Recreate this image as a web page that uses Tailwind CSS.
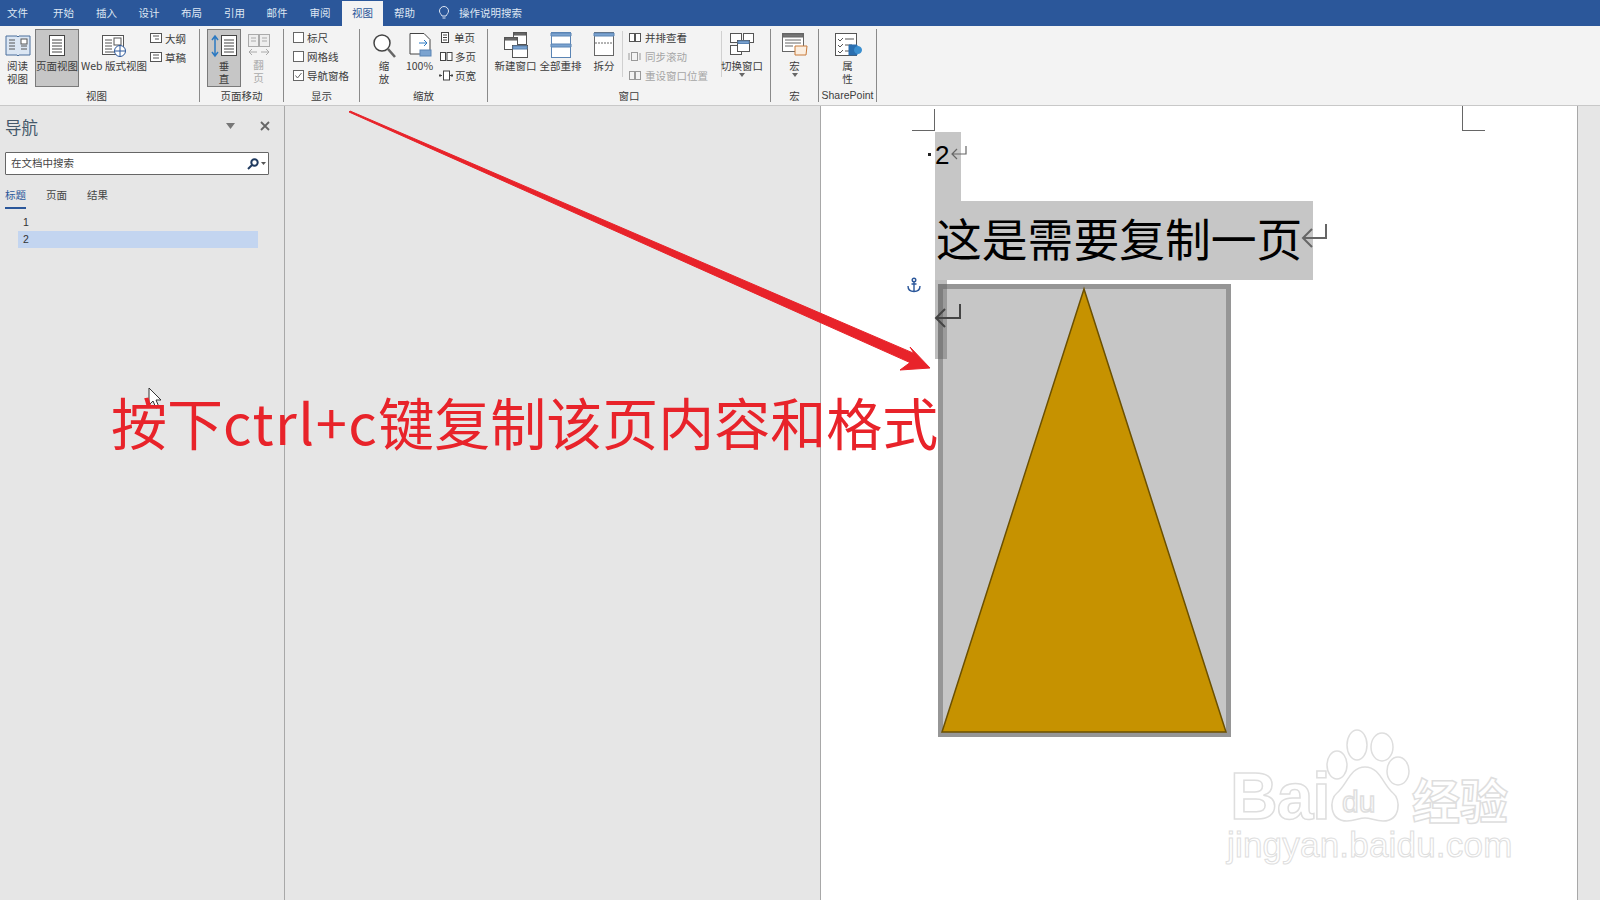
<!DOCTYPE html>
<html lang="zh"><head><meta charset="utf-8"><script src="https://cdn.jsdelivr.net/npm/@tailwindcss/browser@4"></script><title>Word</title></head>
<body class="w-[1600px] h-[900px] overflow-hidden bg-[#e6e6e6] font-['Noto_Sans_CJK_SC',sans-serif] text-[#444]">
<div class="relative w-[1600px] h-[900px] flex flex-col overflow-hidden">
  <!-- title tabs -->
  <div class="h-[26px] bg-[#2b579a] flex items-center text-[10.5px] text-[#dfe7f3] shrink-0 leading-none">
    <span class="w-[35px] text-center">文件</span>
    <span class="w-[43px] ml-[7px] text-center">开始</span>
    <span class="w-[43px] text-center">插入</span>
    <span class="w-[42px] text-center">设计</span>
    <span class="w-[43px] text-center">布局</span>
    <span class="w-[43px] text-center">引用</span>
    <span class="w-[42px] text-center">邮件</span>
    <span class="w-[44px] text-center">审阅</span>
    <span class="w-[41px] h-[25px] mt-[1px] bg-[#f3f3f3] text-[#2b579a] flex items-center justify-center">视图</span>
    <span class="w-[43px] text-center">帮助</span>
    <svg class="ml-[12px] w-[12px] h-[14px]" viewBox="0 0 12 14" fill="none" stroke="#dfe7f3"><path d="M4 10C3 8 1.500 7 1.500 5a4.500 4.500 0 0 1 9 0c0 2-1.500 3-2.500 5zM4.500 12h3"/></svg>
    <span class="ml-[9px]">操作说明搜索</span>
  </div>
  <!-- ribbon -->
  <div class="h-[80px] bg-[#f3f3f3] border-b border-[#c8c8c8] flex shrink-0 text-[10.5px] leading-[13px] text-[#3c3c3c]">
    <!-- 视图 -->
    <div class="w-[200px] flex flex-col border-r border-[#8a8a8a] mt-[3px] h-[73px]">
      <div class="h-[60px] shrink-0 flex">
        <div class="w-[35px] flex flex-col items-center pt-[5px]">
          <svg class="w-[28px] h-[24px] shrink-0" viewBox="0 0 28 24" fill="#fff" stroke="#555"><path d="M2 2h11l1 1 1-1h11v19H15l-1 1-1-1H2z" fill="#dbe6f3" stroke="#4a6f9c"/><path d="M5 6h6M5 9h6M5 12h6M5 15h6M17 12h6M17 15h6" /><rect x="17" y="5" width="6" height="5"/></svg>
          <span class="mt-[1px] text-center w-[24px]">阅读视图</span>
        </div>
        <div class="w-[44px] h-[58px] bg-[#c6c6c6] border border-[#7a7a7a] flex flex-col items-center pt-[4px]">
          <svg class="w-[20px] h-[24px] shrink-0" viewBox="0 0 20 24" fill="#fff" stroke="#444"><rect x="2.500" y="1.500" width="15" height="20"/><path d="M5 6h10M5 9h10M5 12h10M5 15h10M5 18h10"/></svg>
          <span class="mt-[1px] whitespace-nowrap">页面视图</span>
        </div>
        <div class="w-[68px] ml-[1px] flex flex-col items-center pt-[5px]">
          <svg class="w-[28px] h-[24px] shrink-0" viewBox="0 0 28 24" fill="#fff" stroke="#555"><rect x="2.500" y="1.500" width="21" height="19"/><path d="M5 6h7M5 9h7M5 12h7M5 15h7M5 18h10"/><rect x="14" y="4" width="7" height="7"/><circle cx="20" cy="17" r="5.500" stroke="#2b579a"/><path d="M15 17h10M20 11.500v11" stroke="#2b579a"/></svg>
          <span class="mt-[1px] whitespace-nowrap">Web 版式视图</span>
        </div>
        <div class="ml-[1px] flex flex-col gap-[6px] pt-[3px]">
          <div class="flex items-center gap-[2px]"><svg class="w-[14px] h-[13px]" viewBox="0 0 14 13" fill="#fff" stroke="#555"><rect x="1.500" y="1.500" width="11" height="9"/><path d="M4 4h6M6 7h4"/></svg><span>大纲</span></div>
          <div class="flex items-center gap-[2px]"><svg class="w-[14px] h-[13px]" viewBox="0 0 14 13" fill="#fff" stroke="#555"><rect x="1.500" y="1.500" width="11" height="9"/><path d="M4 4h6M4 7h6"/></svg><span>草稿</span></div>
        </div>
      </div>
      <div class="text-center pr-[6px]">视图</div>
    </div>
    <!-- 页面移动 -->
    <div class="w-[84px] flex flex-col border-r border-[#8a8a8a] mt-[3px] h-[73px]">
      <div class="h-[60px] shrink-0 flex pl-[7px]">
        <div class="w-[34px] h-[58px] bg-[#c6c6c6] border border-[#7a7a7a] flex flex-col items-center pt-[4px]">
          <svg class="w-[30px] h-[24px] shrink-0" viewBox="0 0 30 24" fill="#fff" stroke="#444"><rect x="12.500" y="1.500" width="15" height="20"/><path d="M15 6h10M15 9h10M15 12h10M15 15h10M15 18h10"/><path d="M6 2v20M3 6l3-4 3 4M3 18l3 4 3-4" fill="none" stroke="#2b79c2" stroke-width="1.500"/></svg>
          <span class="mt-[1px] w-[12px] text-center">垂直</span>
        </div>
        <div class="w-[27px] ml-[4px] flex flex-col items-center pt-[4px] text-[#aaa]">
          <svg class="w-[24px] h-[24px] shrink-0" viewBox="0 0 24 24" fill="#eee" stroke="#aaa"><rect x="1.500" y="1.500" width="10" height="12"/><rect x="12.500" y="1.500" width="10" height="12"/><path d="M4 5h5M4 8h5M15 5h5M15 8h5"/><path d="M2 19h8M5 16l-3 3 3 3M14 19h8M19 16l3 3-3 3" fill="none"/></svg>
          <span class="mt-[1px] w-[12px] text-center">翻页</span>
        </div>
      </div>
      <div class="text-center">页面移动</div>
    </div>
    <!-- 显示 -->
    <div class="w-[76px] flex flex-col border-r border-[#8a8a8a] mt-[3px] h-[73px]">
      <div class="h-[60px] shrink-0 flex flex-col pl-[9px] pt-[2px] gap-[6px]">
        <div class="flex items-center gap-[3px]"><span class="w-[11px] h-[11px] border border-[#666] bg-white block"></span><span>标尺</span></div>
        <div class="flex items-center gap-[3px]"><span class="w-[11px] h-[11px] border border-[#666] bg-white block"></span><span>网格线</span></div>
        <div class="flex items-center gap-[3px]"><svg class="w-[11px] h-[11px]" viewBox="0 0 11 11" fill="#fff" stroke="#666"><rect x=".5" y=".5" width="10" height="10"/><path d="M2.500 5.500l2 2.500 4-5" fill="none"/></svg><span>导航窗格</span></div>
      </div>
      <div class="text-center">显示</div>
    </div>
    <!-- 缩放 -->
    <div class="w-[128px] flex flex-col border-r border-[#8a8a8a] mt-[3px] h-[73px]">
      <div class="h-[60px] shrink-0 flex pl-[12px]">
        <div class="w-[24px] flex flex-col items-center pt-[4px]">
          <svg class="w-[26px] h-[26px] shrink-0" viewBox="0 0 26 26" fill="#fff" stroke="#444"><circle cx="11" cy="10" r="8" stroke-width="1.500"/><path d="M17 16l7 8" stroke-width="2.500" stroke="#666"/></svg>
          <span class="mt-0 w-[12px] text-center">缩放</span>
        </div>
        <div class="w-[29px] ml-[9px] flex flex-col items-center pt-[3px]">
          <svg class="w-[24px] h-[26px] shrink-0" viewBox="0 0 24 26" fill="#fff" stroke="#444"><path d="M2 1.500h14l6 6V22H2z"/><path d="M11 11h8M16 8l3 3-3 3" fill="none" stroke="#2b79c2"/><rect x="12" y="18" width="11" height="6" fill="#7ba3d0" stroke="#5a84b4"/></svg>
          <span class="mt-[1px]">100%</span>
        </div>
        <div class="ml-[5px] flex flex-col gap-[6px] pt-[2px]">
          <div class="flex items-center gap-[3px]"><svg class="w-[12px] h-[13px]" viewBox="0 0 12 13" fill="#fff" stroke="#444"><rect x="2.500" y="1.500" width="7" height="10"/><path d="M4 4h4M4 6.500h4M4 9h4"/></svg><span>单页</span></div>
          <div class="flex items-center gap-[3px]"><svg class="w-[14px] h-[13px]" viewBox="0 0 14 13" fill="#fff" stroke="#444"><rect x="1.500" y="2.500" width="5" height="8"/><rect x="8" y="2.500" width="5" height="8"/></svg><span class="-ml-[1px]">多页</span></div>
          <div class="flex items-center gap-[3px]"><svg class="w-[14px] h-[13px]" viewBox="0 0 14 13" fill="#fff" stroke="#444"><rect x="4.500" y="2" width="6" height="9"/><path d="M3 6.500H0M1.500 5L0 6.500 1.500 8M11 6.500h3M12.500 5l1.500 1.500L12.500 8" fill="none"/></svg><span class="-ml-[1px]">页宽</span></div>
        </div>
      </div>
      <div class="text-center">缩放</div>
    </div>
    <!-- 窗口 -->
    <div class="w-[283px] flex flex-col border-r border-[#8a8a8a] mt-[3px] h-[73px]">
      <div class="h-[60px] shrink-0 flex pl-[6px]">
        <div class="w-[43px] flex flex-col items-center pt-[2px]">
          <svg class="w-[26px] h-[28px] shrink-0" viewBox="0 0 26 28" fill="#fff" stroke="#555"><rect x="10.500" y="1.500" width="13" height="12"/><rect x="1.500" y="6.500" width="13" height="12"/><rect x="9.500" y="14.500" width="15" height="12"/><path d="M10 15h14v3H10z" fill="#7ba3d0" stroke="#5a84b4"/><path d="M2 7h12v2H2zM11 2h12v2H11z" fill="#777"/></svg>
          <span class="mt-0 whitespace-nowrap">新建窗口</span>
        </div>
        <div class="w-[41px] ml-[3px] flex flex-col items-center pt-[2px]">
          <svg class="w-[22px] h-[28px] shrink-0" viewBox="0 0 22 28" fill="#fff" stroke="#5a84b4"><rect x="1.500" y="1.500" width="19" height="25"/><path d="M1 2h20v3H1zM1 13h20v3H1z" fill="#7ba3d0"/></svg>
          <span class="mt-0 whitespace-nowrap">全部重排</span>
        </div>
        <div class="w-[26px] ml-[10px] flex flex-col items-center pt-[2px]">
          <svg class="w-[22px] h-[28px] shrink-0" viewBox="0 0 22 28" fill="#fff" stroke="#666"><rect x="1.500" y="1.500" width="19" height="23"/><path d="M1 2h20v3H1z" fill="#7ba3d0" stroke="#5a84b4"/><path d="M2 12h18" stroke-dasharray="2 1"/></svg>
          <span class="mt-0 whitespace-nowrap">拆分</span>
        </div>
        <div class="w-[1px] h-[46px] bg-[#d0d0d0] ml-[5px] mt-[2px]"></div>
        <div class="ml-[5px] w-[86px] flex flex-col gap-[6px] pt-[2px]">
          <div class="flex items-center gap-[2px] whitespace-nowrap"><svg class="w-[14px] h-[13px] mr-[1px]" viewBox="0 0 14 13" fill="#fff" stroke="#555"><rect x="1.500" y="2.500" width="5" height="8"/><rect x="7.500" y="2.500" width="5" height="8"/></svg><span>并排查看</span></div>
          <div class="flex items-center gap-[2px] whitespace-nowrap text-[#a5a5a5]"><svg class="w-[14px] h-[13px] mr-[1px]" viewBox="0 0 14 13" fill="#f3f3f3" stroke="#999"><rect x="3.500" y="2.500" width="6" height="8"/><path d="M1 3v7M12 3v7"/></svg><span>同步滚动</span></div>
          <div class="flex items-center gap-[2px] whitespace-nowrap text-[#a5a5a5]"><svg class="w-[14px] h-[13px] mr-[1px]" viewBox="0 0 14 13" fill="#f3f3f3" stroke="#999"><rect x="1.500" y="2.500" width="5" height="8"/><rect x="7.500" y="2.500" width="5" height="8"/></svg><span>重设窗口位置</span></div>
        </div>
        <div class="w-[1px] h-[46px] bg-[#d0d0d0] ml-[7px] mt-[2px]"></div>
        <div class="w-[38px] ml-[1px] flex flex-col items-center pt-[3px]">
          <svg class="w-[26px] h-[26px] shrink-0" viewBox="0 0 26 26" fill="#fff" stroke="#555"><rect x="1.500" y="1.500" width="11" height="9"/><rect x="14.500" y="1.500" width="10" height="9"/><rect x="1.500" y="13.500" width="11" height="9"/><rect x="8.500" y="8.500" width="12" height="11"/><path d="M9 9h11v2.500H9z" fill="#7ba3d0" stroke="#5a84b4"/></svg>
          <span class="mt-[1px] whitespace-nowrap">切换窗口</span>
          <svg class="w-[6px] h-[4px] mt-[1px]" viewBox="0 0 6 4" fill="#666"><path d="M0 0h6L3 4z"/></svg>
        </div>
      </div>
      <div class="text-center">窗口</div>
    </div>
    <!-- 宏 -->
    <div class="w-[48px] flex flex-col border-r border-[#8a8a8a] mt-[3px] h-[73px]">
      <div class="h-[60px] shrink-0 flex flex-col items-center pt-[3px]">
        <svg class="w-[28px] h-[26px] shrink-0" viewBox="0 0 28 26" fill="#fff" stroke="#666"><rect x="1.500" y="1.500" width="21" height="18"/><path d="M2 2h20v3H2z" fill="#777"/><path d="M4 8h16M4 11h16M4 14h8"/><path d="M14 14h12l-1 9H14z" fill="#fbeee0" stroke="#c87a3a"/></svg>
        <span class="mt-[1px]">宏</span>
        <svg class="w-[6px] h-[4px] mt-[1px]" viewBox="0 0 6 4" fill="#666"><path d="M0 0h6L3 4z"/></svg>
      </div>
      <div class="text-center">宏</div>
    </div>
    <!-- SharePoint -->
    <div class="w-[58px] flex flex-col border-r border-[#8a8a8a] mt-[3px] h-[73px]">
      <div class="h-[60px] shrink-0 flex flex-col items-center pt-[3px]">
        <svg class="w-[28px] h-[27px] shrink-0" viewBox="0 0 28 27" fill="#fff" stroke="#555"><rect x="1.500" y="1.500" width="21" height="22"/><path d="M4 7l2 2 3-3M4 13l2 2 3-3M4 19l2 2 3-3M11 7h9M11 13h7M11 19h4" fill="none"/><path d="M15 13h8v10h-8z" fill="#2a6fb0" stroke="#2a6fb0"/><circle cx="24" cy="18" r="3.500" fill="#3b8fd0" stroke="#3b8fd0"/></svg>
        <span class="mt-0 w-[12px] text-center">属性</span>
      </div>
      <div class="text-center font-['Liberation_Sans',sans-serif] whitespace-nowrap">SharePoint</div>
    </div>
  </div>
  <!-- body -->
  <div class="flex flex-1 min-h-0">
    <!-- nav -->
    <aside class="w-[285px] border-r border-[#a8a8a8] shrink-0 px-[5px]">
      <div class="flex items-center h-[42px] pt-[1px]">
        <span class="text-[16.500px] text-[#44586a] leading-none">导航</span>
        <svg class="ml-[188px] w-[9px] h-[6px] -mt-[3px]" viewBox="0 0 9 6" fill="#777"><path d="M0 0h9L4.500 6z"/></svg>
        <svg class="ml-[25px] w-[10px] h-[10px] -mt-[3px]" viewBox="0 0 10 10" stroke="#666" stroke-width="1.800"><path d="M1 1l8 8M9 1l-8 8"/></svg>
      </div>
      <div class="w-[264px] h-[23px] mt-[4px] bg-white border border-[#666] rounded-[1px] flex items-center pl-[5px] pr-[2px] text-[10.500px]">
        <span class="flex-1 -mt-[2px]">在文档中搜索</span>
        <svg class="w-[12px] h-[12px]" viewBox="0 0 12 12" fill="none" stroke="#1f3a5f" stroke-width="2"><circle cx="7.500" cy="4.500" r="3.200"/><path d="M5 7l-4 4"/></svg>
        <svg class="ml-[2px] w-[5px] h-[3px]" viewBox="0 0 5 3" fill="#555"><path d="M0 0h5L2.500 3z"/></svg>
      </div>
      <div class="flex mt-[12px] text-[10.500px] leading-[15px]">
        <div class="w-[21px] h-[22px] border-b-2 border-[#2b579a] text-[#2b579a]">标题</div>
        <div class="ml-[20px]">页面</div>
        <div class="ml-[20px]">结果</div>
      </div>
      <div class="ml-[13px] w-[240px] mt-[5px] text-[10.500px] font-['Liberation_Sans',sans-serif] leading-[17px] text-[#333]">
        <div class="pl-[5px] h-[17px]">1</div>
        <div class="pl-[5px] h-[17px] bg-[#c3d5f0]">2</div>
      </div>
    </aside>
    <div class="w-[535px] shrink-0"></div>
    <!-- page -->
    <main class="relative w-[758px] bg-white border-x border-[#a8a8a8] shrink-0 overflow-hidden text-black">
      <div class="absolute left-[91px] top-[3px] w-[23px] h-[22px] border-r border-b border-[#666]"></div>
      <div class="absolute left-[641px] top-0 w-[23px] h-[25px] border-l border-b border-[#666]"></div>
      <div class="absolute left-[114px] top-[26px] w-[26px] h-[69px] bg-[#c6c6c6]"></div>
      <div class="absolute left-[114px] top-[95px] w-[378px] h-[79px] bg-[#c6c6c6]"></div>
      <div class="absolute left-[107px] top-[47px] w-[3px] h-[3px] bg-[#222]"></div>
      <div class="absolute left-[114px] top-[34px] text-[26px] leading-[30px] font-['Liberation_Sans',sans-serif]">2</div>
      <svg class="absolute left-[129px] top-[39px] w-[18px] h-[18px]" viewBox="0 0 18 18" fill="none" stroke="#666" stroke-width="1.200"><path d="M16 1v8H2M7 4L2 9l5 5"/></svg>
      <div class="absolute left-[115px] top-[101px] text-[45.800px] leading-[60px] whitespace-nowrap">这是需要复制一页</div>
      <svg class="absolute left-[480px] top-[117px] w-[28px] h-[26px]" viewBox="0 0 28 26" fill="none" stroke="#666" stroke-width="2"><path d="M25 1v14H3M11 6l-9 9 9 9"/></svg>
      <svg class="absolute left-[85px] top-[171px] w-[16px] h-[16px]" viewBox="0 0 16 16" fill="none" stroke="#2b579a" stroke-width="1.400"><circle cx="8" cy="3" r="1.800"/><path d="M8 5v10M2 9c0 4 3 5.500 6 5.500s6-1.500 6-5.500M5.500 7h5"/></svg>
      <!-- shape -->
      <svg class="absolute left-[117px] top-[178px] w-[293px] h-[453px]" viewBox="0 0 293 453">
        <rect x="2.500" y="2.500" width="288" height="448" fill="#c6c6c6" stroke="#969696" stroke-width="5"/>
        <path d="M146 5L4 448h284z" fill="#c69200" stroke="#6b5000" stroke-width="1.500"/>
      </svg>
      <div class="absolute left-[114px] top-[174px] w-[12px] h-[79px] bg-[#5a5a5a]/40"></div>
      <svg class="absolute left-[113px] top-[197px] w-[29px] h-[26px]" viewBox="0 0 29 26" fill="none" stroke="#444" stroke-width="2"><path d="M26 1v14H3M11 6l-9 9 9 9"/></svg>
      <!-- watermark -->
      <svg class="absolute left-[379px] top-[605px] w-[340px] h-[180px]" viewBox="0 0 340 180">
        <g fill="#fff" stroke="#dedede" stroke-width="1.500">
          <ellipse cx="137" cy="54" rx="10" ry="14"/><ellipse cx="157" cy="34" rx="10" ry="15"/><ellipse cx="182" cy="36" rx="11" ry="14"/><ellipse cx="198" cy="60" rx="11" ry="14"/>
          <path d="M165 56c-15 0-18 18-28 26-8 6-8 28 10 28 8 0 12-3 18-3s10 3 18 3c18 0 18-22 10-28-10-8-13-26-28-26z"/>
          <text x="30" y="108" font-family="'Liberation Sans',sans-serif" font-size="66" font-weight="700" letter-spacing="-1">Bai</text>
          <text x="142" y="101" font-family="'Liberation Sans',sans-serif" font-size="30" fill="#fff">du</text>
          <text x="212" y="108" font-family="'Noto Sans CJK SC',sans-serif" font-size="48" font-weight="700">经验</text>
          <text x="27" y="146" font-family="'Liberation Sans',sans-serif" font-size="35" stroke-width="1" letter-spacing=".2">jingyan.baidu.com</text>
        </g>
      </svg>
    </main>
  </div>
  <!-- annotation overlay -->
  <svg class="absolute left-0 top-0 w-[1600px] h-[900px] pointer-events-none" viewBox="0 0 1600 900">
    <path d="M350 111L914 353.400L910 347L930 368L900 370L910 362.600L349 112z" fill="#e8232a" stroke="#e8232a" stroke-width="1" stroke-linejoin="round"/>
    <path d="M149 388v17l4-4 3 7 3-1-3-7h5z" fill="#fff" stroke="#333"/>
  </svg>
  <div class="absolute left-[111px] top-[381px] text-[56px] leading-[80px] text-[#e8232a] font-normal whitespace-nowrap">按下<span class="tracking-[1.500px]">ctrl+c</span>键复制该页内容和格式</div>
</div>
</body></html>
